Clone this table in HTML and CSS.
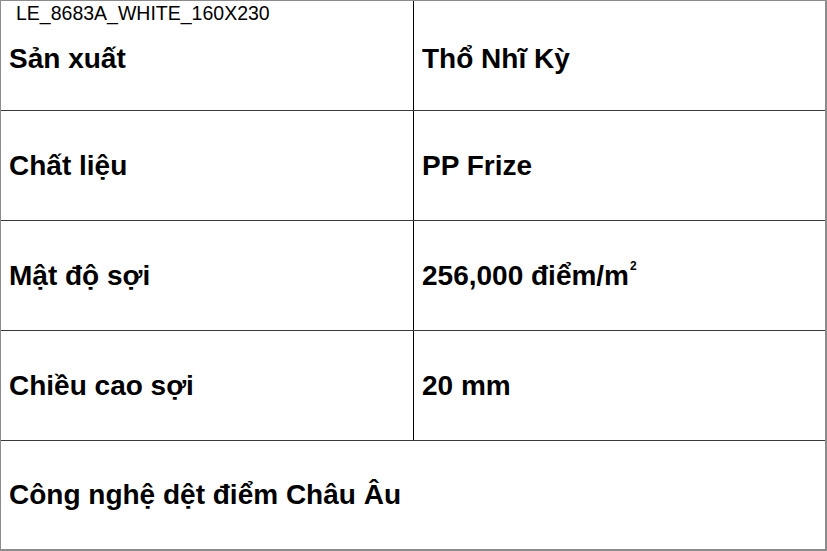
FILE: index.html
```html
<!DOCTYPE html>
<html lang="vi">
<head>
<meta charset="utf-8">
<title>LE_8683A_WHITE_160X230</title>
<link rel="stylesheet" href="styles.css">
</head>
<body>
<div class="sheet">
  <div class="row row-first">
    <div class="cell cell-label">
      <span class="caption">LE_8683A_WHITE_160X230</span>
      Sản xuất
    </div>
    <div class="cell">Thổ Nhĩ Kỳ</div>
  </div>
  <div class="row">
    <div class="cell cell-label">Chất liệu</div>
    <div class="cell">PP Frize</div>
  </div>
  <div class="row">
    <div class="cell cell-label">Mật độ sợi</div>
    <div class="cell">256,000 điểm/m<sup class="sup">2</sup></div>
  </div>
  <div class="row">
    <div class="cell cell-label">Chiều cao sợi</div>
    <div class="cell">20 mm</div>
  </div>
  <div class="row row-last">
    <div class="cell cell-wide">Công nghệ dệt điểm Châu Âu</div>
  </div>
</div>
</body>
</html>
```

FILE: styles.css
```css
html, body {
  margin: 0;
  padding: 0;
  background: #ffffff;
}

.sheet {
  box-sizing: border-box;
  width: 827px;
  height: 551px;
  border-top: 1px solid #8c8c8c;
  border-left: 1px solid #8c8c8c;
  border-right: 2px solid #8c8c8c;
  border-bottom: 2px solid #8c8c8c;
  display: grid;
  grid-template-rows: 110px 110px 110px 110px 1fr;
  font-family: "Liberation Sans", Arial, Helvetica, sans-serif;
  color: #000;
}

.row {
  display: grid;
  grid-template-columns: 413px 1fr;
  border-bottom: 1px solid #3a3a3a;
  box-sizing: border-box;
}

.row-last {
  grid-template-columns: 1fr;
  border-bottom: none;
}

.cell {
  position: relative;
  display: flex;
  align-items: center;
  padding-left: 8px;
  font-size: 28px;
  font-weight: bold;
  line-height: normal;
  box-sizing: border-box;
}

.cell-label {
  border-right: 1px solid #000;
}

.row-first .cell {
  padding-top: 6px;
}

.caption {
  position: absolute;
  top: 1px;
  left: 15px;
  font-size: 19.5px;
  font-weight: normal;
  line-height: normal;
}

.sup {
  font-size: 12px;
  line-height: 1;
  vertical-align: baseline;
  position: relative;
  top: -10px;
  margin-left: 1px;
}
```
